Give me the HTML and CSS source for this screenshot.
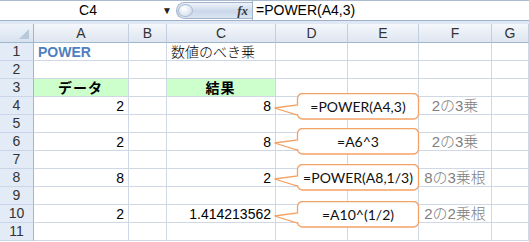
FILE: index.html
```html
<!doctype html>
<html lang="ja">

<head>
    <title>POWER</title>
    <meta charset="UTF-8" />
    <link rel="stylesheet" href="styles.css">
</head>

<body>
    <div class="fbar">
        <div class="namebox">C4<span class="drop">&#9660;</span></div>
        <div class="fxpill"><span class="knob"></span><i class="fx">fx</i></div>
        <div class="formula">=POWER(A4,3)</div>
    </div>
    <div class="strip"></div>

    <div class="sheet">
        <div class="corner"></div>
        <div class="ch">A</div><div class="ch">B</div><div class="ch">C</div><div class="ch">D</div><div class="ch">E</div><div class="ch">F</div><div class="ch">G</div>

        <div class="rh">1</div><div class="c title">POWER</div><div class="c"></div><div class="c jp">数値のべき乗</div><div class="c"></div><div class="c"></div><div class="c"></div><div class="c"></div>
        <div class="rh">2</div><div class="c"></div><div class="c"></div><div class="c"></div><div class="c"></div><div class="c"></div><div class="c"></div><div class="c"></div>
        <div class="rh">3</div><div class="c head">データ</div><div class="c"></div><div class="c head">結果</div><div class="c"></div><div class="c"></div><div class="c"></div><div class="c"></div>
        <div class="rh">4</div><div class="c num">2</div><div class="c"></div><div class="c num">8</div><div class="c"></div><div class="c"></div><div class="c note">2の3乗</div><div class="c"></div>
        <div class="rh">5</div><div class="c"></div><div class="c"></div><div class="c"></div><div class="c"></div><div class="c"></div><div class="c"></div><div class="c"></div>
        <div class="rh">6</div><div class="c num">2</div><div class="c"></div><div class="c num">8</div><div class="c"></div><div class="c"></div><div class="c note">2の3乗</div><div class="c"></div>
        <div class="rh">7</div><div class="c"></div><div class="c"></div><div class="c"></div><div class="c"></div><div class="c"></div><div class="c"></div><div class="c"></div>
        <div class="rh">8</div><div class="c num">8</div><div class="c"></div><div class="c num">2</div><div class="c"></div><div class="c"></div><div class="c note">8の3乗根</div><div class="c"></div>
        <div class="rh">9</div><div class="c"></div><div class="c"></div><div class="c"></div><div class="c"></div><div class="c"></div><div class="c"></div><div class="c"></div>
        <div class="rh">10</div><div class="c num">2</div><div class="c"></div><div class="c num">1.414213562</div><div class="c"></div><div class="c"></div><div class="c note">2の2乗根</div><div class="c"></div>
        <div class="rh">11</div><div class="c"></div><div class="c"></div><div class="c"></div><div class="c"></div><div class="c"></div><div class="c"></div><div class="c"></div>
    </div>

    <!-- callouts over column D/E -->
    <div class="callout co1">
        <svg viewBox="0 0 146 27" width="146" height="27"><path d="M23.5 5.5a5 5 0 0 1 5-5H139.5a5 5 0 0 1 5 5V21a5 5 0 0 1-5 5H28.5a5 5 0 0 1-5-5V22L0.5 15L23.5 12Z" /></svg>
        <span>=POWER(A4,3)</span>
    </div>
    <div class="callout co2">
        <svg viewBox="0 0 146 27" width="146" height="27"><path d="M23.5 5.5a5 5 0 0 1 5-5H139.5a5 5 0 0 1 5 5V21a5 5 0 0 1-5 5H28.5a5 5 0 0 1-5-5V22L0.5 15L23.5 12Z" /></svg>
        <span>=A6^3</span>
    </div>
    <div class="callout co3">
        <svg viewBox="0 0 146 27" width="146" height="27"><path d="M23.5 5.5a5 5 0 0 1 5-5H139.5a5 5 0 0 1 5 5V21a5 5 0 0 1-5 5H28.5a5 5 0 0 1-5-5V22L0.5 15L23.5 12Z" /></svg>
        <span>=POWER(A8,1/3)</span>
    </div>
    <div class="callout co4">
        <svg viewBox="0 0 146 27" width="146" height="27"><path d="M23.5 5.5a5 5 0 0 1 5-5H139.5a5 5 0 0 1 5 5V21a5 5 0 0 1-5 5H28.5a5 5 0 0 1-5-5V22L0.5 15L23.5 12Z" /></svg>
        <span>=A10^(1/2)</span>
    </div>
</body>

</html>
```

FILE: styles.css
```css
body {
    margin: 0;
    padding: 0;
    width: 529px;
    height: 242px;
    overflow: hidden;
    background: #fff;
    font-family: "Liberation Sans", "Noto Sans CJK JP", sans-serif;
    font-size: 14px;
    color: #000;
    position: relative;
}

/* formula bar */
.fbar {
    display: flex;
    height: 21px;
    box-sizing: border-box;
    border-top: 1px solid #a9bad1;
    border-bottom: 1px solid #9fb1ca;
    background: #fff;
}

.namebox {
    width: 176px;
    display: flex;
    align-items: center;
    justify-content: center;
    position: relative;
    line-height: 19px;
}

.drop {
    position: absolute;
    right: 4px;
    top: 0;
    font-size: 10px;
    color: #222;
}

.fxpill {
    width: 76px;
    height: 17px;
    margin-top: 1px;
    box-sizing: border-box;
    border: 1px solid #a3b5cd;
    border-right: none;
    border-radius: 9px 0 0 9px;
    background: linear-gradient(#eef3fa, #cbd8ea 55%, #dbe5f2);
    display: flex;
    align-items: center;
    justify-content: space-between;
    padding: 0 4px 0 1px;
}

.knob {
    width: 15px;
    height: 13px;
    border-radius: 50%;
    background: radial-gradient(circle at 40% 35%, #ffffff, #dfe7f2 60%, #b8c8dd);
    border: 1px solid #a9bcd4;
    box-sizing: border-box;
}

.fx {
    font-family: "Liberation Serif", serif;
    font-weight: bold;
    font-size: 13px;
    color: #3a3a3a;
}

.formula {
    flex: 1;
    border-left: 1px solid #a3b5cd;
    padding-left: 3px;
    line-height: 19px;
}

.strip {
    height: 3px;
    background: #dfe8f4;
}

/* grid */
.sheet {
    display: grid;
    grid-template-columns: 34px 95px 38px 109px 72px 71px 73px 1fr;
    grid-template-rows: 19px;
    grid-auto-rows: 18px;
}

.corner,
.ch,
.rh {
    box-sizing: border-box;
    border-right: 1px solid #9eb6ce;
    border-bottom: 1px solid #9eb6ce;
    color: #333;
    text-align: center;
    line-height: 18px;
}

.corner {
    background: linear-gradient(#eef3fa, #d8e2ef);
    position: relative;
}

.corner::after {
    content: "";
    position: absolute;
    right: 4px;
    bottom: 3px;
    border-left: 10px solid transparent;
    border-bottom: 10px solid #b9c9dc;
}

.ch {
    background: linear-gradient(#f4f7fb, #dfe6f0);
    border-right-color: #c3cfe0;
}

.rh {
    background: #e3ebf6;
    border-bottom-color: #c9d6e7;
    line-height: 17px;
}

.c {
    box-sizing: border-box;
    border-right: 1px solid #d0d7e5;
    border-bottom: 1px solid #d0d7e5;
    padding: 0 4px 0 3px;
    line-height: 18px;
    white-space: nowrap;
    overflow: hidden;
}

.title {
    color: #4f7fbf;
    font-weight: bold;
    font-size: 14px;
    padding-left: 4px;
    overflow: visible;
}

.jp {
    padding-left: 4px;
    font-weight: 300;
    overflow: visible;
}

.head {
    background: #ccffcc;
    text-align: center;
    font-weight: bold;
    letter-spacing: 1px;
}

.num {
    text-align: right;
}

.note {
    color: #7f7f7f;
    text-align: center;
    padding: 0;
    font-size: 15px;
    font-weight: 300;
    overflow: visible;
}

/* callouts */
.callout {
    position: absolute;
    left: 274px;
    width: 146px;
    height: 27px;
}

.callout svg {
    position: absolute;
    left: 0;
    top: 0;
}

.callout path {
    fill: #fff;
    stroke: #f3a266;
    stroke-width: 1.3;
}

.callout span {
    position: absolute;
    left: 24px;
    right: 2px;
    top: 0;
    bottom: 1px;
    display: flex;
    align-items: center;
    justify-content: center;
    font-family: Lato, "Liberation Sans", sans-serif;
    font-size: 14px;
    color: #111;
}

.co1 { top: 93px; }
.co2 { top: 128px; }
.co3 { top: 164px; }
.co4 { top: 201px; }
```
